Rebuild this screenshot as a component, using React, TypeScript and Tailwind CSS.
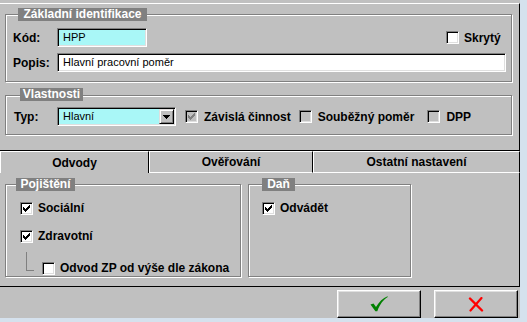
import React from "react";

const CheckMark = ({ color = "#000" }: { color?: string }) => (
  <svg width="7" height="7" viewBox="0 0 7 7" shapeRendering="crispEdges">
    <path
      d="M0 2H1V3H2V4H3V3H4V2H5V1H6V0H7V3H6V4H5V5H4V6H3V7H2V6H1V5H0Z"
      fill={color}
    />
  </svg>
);

const Box = ({ checked = false, disabled = false }: { checked?: boolean; disabled?: boolean }) => (
  <div
    className={`w-[13px] h-[13px] shrink-0 flex items-center justify-center border border-t-[#808080] border-l-[#808080] border-b-white border-r-white shadow-[inset_1px_1px_0_#000,inset_-1px_-1px_0_#dfdfdf] ${
      disabled ? "bg-[#c0c0c0]" : "bg-white"
    }`}
  >
    {checked && <CheckMark color={disabled ? "#808080" : "#000"} />}
  </div>
);

const Legend = ({ text, left, width, top }: { text: string; left: string; width: string; top: string }) => (
  <div
    className={`absolute ${left} ${width} ${top} h-[13px] bg-[#808080] text-white font-bold text-[12px] leading-[13px] flex items-center justify-center`}
  >
    {text}
  </div>
);

export default function App() {
  return (
    <div className="w-[527px] h-[322px] bg-[#d5e1ed] font-['Liberation_Sans',Arial,sans-serif] text-black">
      <div className="w-[520px] h-[318px] bg-[#c0c0c0] flex flex-col">
        {/* top panel */}
        <div className="mt-[3px] h-[148px] border-t border-t-white border-b border-b-black border-r border-r-black flex flex-col">
          {/* Základní identifikace */}
          <div className="relative mt-[10px] ml-[5px] w-[507px] h-[68px] border border-[#808080] shadow-[1px_1px_0_#fff,inset_1px_1px_0_#fff]">
            <Legend text="Základní identifikace" left="left-[12px]" width="w-[129px]" top="top-[-7px]" />
            <div className="flex items-center pt-[13px] pl-[7px]">
              <div className="w-[44px] text-[12px] font-bold">Kód:</div>
              <div className="w-[90px] h-[19px] bg-[#a9f7f7] border border-t-[#808080] border-l-[#808080] border-b-white border-r-white shadow-[inset_1px_1px_0_#000,inset_-1px_-1px_0_#dfdfdf] text-[11px] pl-[5px] flex items-center">
                HPP
              </div>
              <div className="ml-[299px] flex items-center gap-[5px]">
                <Box />
                <span className="text-[12px] font-bold">Skrytý</span>
              </div>
            </div>
            <div className="flex items-center mt-[6px] pl-[7px]">
              <div className="w-[44px] text-[12px] font-bold">Popis:</div>
              <div className="w-[449px] h-[19px] bg-white border border-t-[#808080] border-l-[#808080] border-b-white border-r-white shadow-[inset_1px_1px_0_#000,inset_-1px_-1px_0_#dfdfdf] text-[11px] pl-[5px] flex items-center">
                Hlavní pracovní poměr
              </div>
            </div>
          </div>

          {/* Vlastnosti */}
          <div className="relative mt-[13px] ml-[5px] w-[507px] h-[40px] border border-[#808080] shadow-[1px_1px_0_#fff,inset_1px_1px_0_#fff]">
            <Legend text="Vlastnosti" left="left-[14px]" width="w-[63px]" top="top-[-8px]" />
            <div className="flex items-center pt-[11px] pl-[8px]">
              <div className="w-[43px] text-[12px] font-bold">Typ:</div>
              <div className="w-[119px] h-[19px] bg-[#a9f7f7] border border-t-[#808080] border-l-[#808080] border-b-white border-r-white shadow-[inset_1px_1px_0_#000,inset_-1px_-1px_0_#dfdfdf] flex items-center">
                <span className="flex-1 text-[11px] pl-[5px]">Hlavní</span>
                <div className="w-[15px] h-[15px] mr-[1px] bg-[#c0c0c0] border border-t-[#dfdfdf] border-l-[#dfdfdf] border-b-black border-r-black shadow-[inset_1px_1px_0_#fff,inset_-1px_-1px_0_#808080] flex items-center justify-center">
                  <svg width="7" height="4" viewBox="0 0 7 4" shapeRendering="crispEdges">
                    <path d="M0 0H7V1H6V2H5V3H4V4H3V3H2V2H1V1H0Z" fill="#000" />
                  </svg>
                </div>
              </div>
              <div className="ml-[9px] flex items-center gap-[6px]">
                <Box checked disabled />
                <span className="text-[12px] font-bold">Závislá činnost</span>
              </div>
              <div className="ml-[8px] flex items-center gap-[6px]">
                <Box disabled />
                <span className="text-[12px] font-bold">Souběžný poměr</span>
              </div>
              <div className="ml-[13px] flex items-center gap-[6px]">
                <Box disabled />
                <span className="text-[12px] font-bold">DPP</span>
              </div>
            </div>
          </div>
        </div>

        {/* tabs */}
        <div className="flex h-[22px]">
          <div className="w-[149px] border-t border-t-white border-l border-l-white border-r border-r-black flex items-center justify-center text-[12px] font-bold">
            Odvody
          </div>
          <div className="w-[164px] border-t border-t-white border-l border-l-white border-r border-r-black border-b border-b-white flex items-center justify-center text-[12px] font-bold">
            Ověřování
          </div>
          <div className="w-[207px] border-t border-t-white border-l border-l-white border-r border-r-black border-b border-b-white flex items-center justify-center text-[12px] font-bold">
            Ostatní nastavení
          </div>
        </div>

        {/* tab page */}
        <div className="h-[114px] border-b border-b-black border-r border-r-black flex items-start pt-[11px]">
          <div className="relative ml-[5px] w-[236px] h-[93px] border border-[#808080] shadow-[1px_1px_0_#fff,inset_1px_1px_0_#fff] flex flex-col">
            <Legend text="Pojištění" left="left-[10px]" width="w-[59px]" top="top-[-7px]" />
            <div className="flex items-center mt-[14px] ml-[14px] gap-[5px]">
              <Box checked />
              <span className="text-[12px] font-bold">Sociální</span>
            </div>
            <div className="flex items-center mt-[10px] ml-[14px] gap-[5px]">
              <Box checked />
              <span className="text-[12px] font-bold">Zdravotní</span>
            </div>
            <div className="flex items-center mt-[14px] ml-[20px]">
              <div className="w-[8px] h-[19px] -mt-[14px] border-l border-b border-[#808080]" />
              <div className="ml-[8px] flex items-center gap-[5px]">
                <Box />
                <span className="text-[12px] font-bold">Odvod ZP od výše dle zákona</span>
              </div>
            </div>
          </div>
          <div className="relative ml-[7px] w-[163px] h-[93px] border border-[#808080] shadow-[1px_1px_0_#fff,inset_1px_1px_0_#fff]">
            <Legend text="Daň" left="left-[13px]" width="w-[33px]" top="top-[-7px]" />
            <div className="flex items-center mt-[14px] ml-[13px] gap-[5px]">
              <Box checked />
              <span className="text-[12px] font-bold">Odvádět</span>
            </div>
          </div>
        </div>

        {/* buttons */}
        <div className="flex justify-end items-start pt-[3px] pr-[2px] gap-[13px] flex-1">
          <button className="w-[84px] h-[28px] bg-[#c0c0c0] border border-t-white border-l-white border-b-black border-r-black shadow-[inset_-1px_-1px_0_#808080,inset_1px_1px_0_#dfdfdf] flex items-center justify-center">
            <svg width="18" height="16" viewBox="0 0 18 16">
              <path d="M0.5 8.5 L3.5 7.5 L6 11 C9 6 13 2 17.5 0.3 L17.8 1 C13.5 3.5 10 8 7.3 15.2 L5.4 15.2 Z" fill="#008000" />
            </svg>
          </button>
          <button className="w-[84px] h-[28px] bg-[#c0c0c0] border border-t-white border-l-white border-b-black border-r-black shadow-[inset_-1px_-1px_0_#808080,inset_1px_1px_0_#dfdfdf] flex items-center justify-center">
            <svg width="16" height="15" viewBox="0 0 16 15">
              <path d="M2 1.5 L14 13.5" stroke="#ff0000" strokeWidth="2.4" strokeLinecap="round" />
              <path d="M13.5 1 L2.5 13.5" stroke="#ff0000" strokeWidth="2.2" strokeLinecap="round" />
            </svg>
          </button>
        </div>
      </div>
    </div>
  );
}
